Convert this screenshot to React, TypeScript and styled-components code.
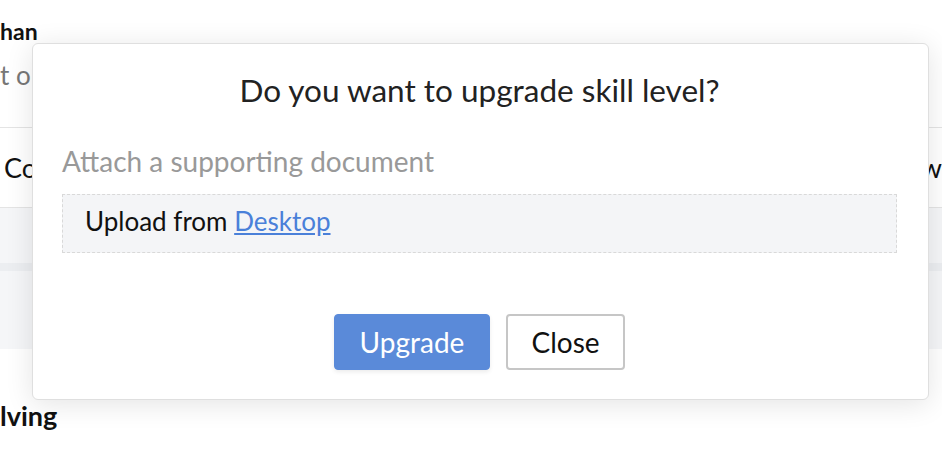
import React from "react";
import styled, { createGlobalStyle } from "styled-components";

const GlobalStyle = createGlobalStyle`
  html, body {
    margin: 0;
    padding: 0;
    background: #ffffff;
    font-family: Lato, "Open Sans", Arial, sans-serif;
    overflow: hidden;
  }
  * {
    box-sizing: border-box;
  }
`;

const Page = styled.div({
  position: "relative",
  width: "942px",
  height: "454px",
  overflow: "hidden",
  background: "#ffffff",
});

const Header = styled.div({
  height: "128px",
  paddingTop: "17px",
  borderBottom: "1px solid #e4e4e4",
});

const Name = styled.div({
  fontSize: "23px",
  fontWeight: 700,
  color: "#111111",
  lineHeight: "28px",
});

const Subtitle = styled.div({
  marginTop: "15px",
  fontSize: "26px",
  color: "#777777",
  lineHeight: "30px",
  whiteSpace: "nowrap",
});

const TableHead = styled.div({
  height: "80px",
  display: "flex",
  alignItems: "center",
  justifyContent: "space-between",
  padding: "0 0 0 4px",
  borderBottom: "1px solid #e4e4e4",
  fontSize: "27px",
  color: "#111111",
  whiteSpace: "nowrap",
});

const GrayBlock = styled.div({
  height: "141px",
  background: "#f5f6f8",
  display: "flex",
  flexDirection: "column",
  paddingTop: "55px",
});

const Stripe = styled.div({
  height: "8px",
  background: "#eceef1",
});

const Section = styled.div({
  paddingTop: "51px",
  fontSize: "27px",
  lineHeight: "32px",
  fontWeight: 700,
  color: "#111111",
});

const Modal = styled.div({
  position: "absolute",
  left: "32px",
  top: "43px",
  width: "897px",
  height: "357px",
  background: "#ffffff",
  border: "1px solid #dfdfdf",
  borderRadius: "6px",
  boxShadow: "0 4px 28px rgba(0, 0, 0, 0.11)",
  padding: "0 31px 0 29px",
  display: "flex",
  flexDirection: "column",
});

const Title = styled.h2({
  margin: "27px 0 0",
  textAlign: "center",
  fontSize: "31.5px",
  fontWeight: 400,
  color: "#222222",
  lineHeight: "38px",
});

const Label = styled.div({
  marginTop: "35px",
  fontSize: "28px",
  color: "#999999",
  lineHeight: "34px",
  whiteSpace: "nowrap",
});

const DropZone = styled.div({
  marginTop: "16px",
  height: "59px",
  border: "1px dashed #d9d9d9",
  background: "#f4f5f7",
  display: "flex",
  alignItems: "center",
  padding: "0 0 6px 22px",
  fontSize: "26px",
  color: "#111111",
  whiteSpace: "pre",
});

const Link = styled.a({
  color: "#4a80d9",
  textDecoration: "underline",
  cursor: "pointer",
});

const Actions = styled.div({
  marginTop: "61px",
  display: "flex",
  justifyContent: "center",
  gap: "16px",
});

const Button = styled.button<{ $primary?: boolean }>((p) => ({
  width: p.$primary ? "156px" : "119px",
  height: "56px",
  padding: 0,
  borderRadius: "4px",
  fontFamily: "Lato, Arial, sans-serif",
  fontSize: "28px",
  cursor: "pointer",
  background: p.$primary ? "#5a8ad9" : "#ffffff",
  color: p.$primary ? "#ffffff" : "#111111",
  border: p.$primary ? "1px solid #5a8ad9" : "2px solid #c6c6c6",
  boxShadow: p.$primary ? "0 2px 4px rgba(0,0,0,0.08)" : "none",
}));

export default function App() {
  return (
    <Page>
      <GlobalStyle />
      <Header>
        <Name>han</Name>
        <Subtitle>t o</Subtitle>
      </Header>
      <TableHead>
        <span>Co</span>
        <span>w</span>
      </TableHead>
      <GrayBlock>
        <Stripe />
      </GrayBlock>
      <Section>lving</Section>
      <Modal>
        <Title>Do you want to upgrade skill level?</Title>
        <Label>Attach a supporting document</Label>
        <DropZone>
          Upload from <Link>Desktop</Link>
        </DropZone>
        <Actions>
          <Button $primary>Upgrade</Button>
          <Button>Close</Button>
        </Actions>
      </Modal>
    </Page>
  );
}
